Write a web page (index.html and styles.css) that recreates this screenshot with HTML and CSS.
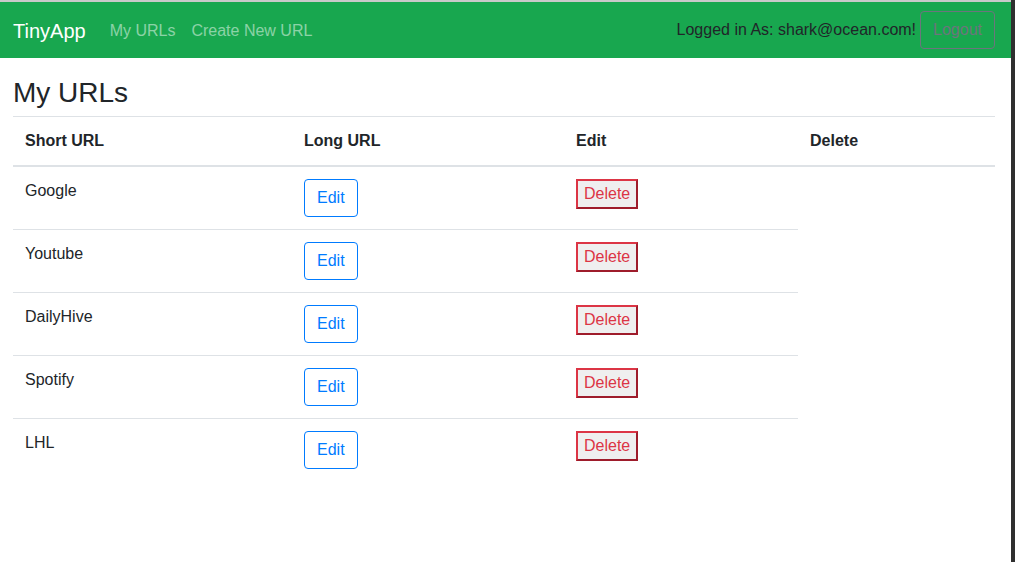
FILE: index.html
```html
<!DOCTYPE html>
<html lang="en">
<head>
<meta charset="utf-8">
<title>TinyApp</title>
<link rel="stylesheet" href="styles.css">
</head>
<body>
<div class="frame">
  <div class="page">
    <nav class="navbar">
      <a class="brand" href="#">TinyApp</a>
      <ul class="nav-links">
        <li><a class="nav-link" href="#">My URLs</a></li>
        <li><a class="nav-link" href="#">Create New URL</a></li>
      </ul>
      <div class="user">
        <span class="user-text">Logged in As: shark@ocean.com!</span>
        <button class="btn-logout" type="button">Logout</button>
      </div>
    </nav>
    <main class="content">
      <h3 class="title">My URLs</h3>
      <table class="url-table">
        <thead>
          <tr>
            <th class="col-short">Short URL</th>
            <th class="col-long">Long URL</th>
            <th class="col-edit">Edit</th>
            <th class="col-delete">Delete</th>
          </tr>
        </thead>
        <tbody>
          <tr>
            <td>Google</td>
            <td><a class="btn-edit" href="#">Edit</a></td>
            <td><button class="btn-delete" type="button">Delete</button></td>
          </tr>
          <tr>
            <td>Youtube</td>
            <td><a class="btn-edit" href="#">Edit</a></td>
            <td><button class="btn-delete" type="button">Delete</button></td>
          </tr>
          <tr>
            <td>DailyHive</td>
            <td><a class="btn-edit" href="#">Edit</a></td>
            <td><button class="btn-delete" type="button">Delete</button></td>
          </tr>
          <tr>
            <td>Spotify</td>
            <td><a class="btn-edit" href="#">Edit</a></td>
            <td><button class="btn-delete" type="button">Delete</button></td>
          </tr>
          <tr>
            <td>LHL</td>
            <td><a class="btn-edit" href="#">Edit</a></td>
            <td><button class="btn-delete" type="button">Delete</button></td>
          </tr>
        </tbody>
      </table>
    </main>
  </div>
  <div class="edge"></div>
</div>
</body>
</html>
```

FILE: styles.css
```css
* { box-sizing: border-box; }

html, body {
  margin: 0;
  height: 100%;
}

body {
  font-family: "Liberation Sans", Arial, sans-serif;
  font-size: 16px;
  line-height: 1.5;
  color: #212529;
  background: #fff;
}

.frame {
  display: flex;
  height: 562px;
}

.page {
  flex: 1;
  border-top: 2px solid #c9c9c9;
}

.edge {
  width: 4px;
  background: #2f2f2f;
}

.navbar {
  display: flex;
  align-items: center;
  height: 56px;
  padding: 0 16px 0 13px;
  background: #18a74f;
}

.brand {
  font-size: 20px;
  line-height: 30px;
  color: #fff;
  text-decoration: none;
  margin-right: 16px;
  margin-top: 2px;
}

.nav-links {
  display: flex;
  list-style: none;
  margin: 2px 0 0 0;
  padding: 0;
}

.nav-link {
  display: block;
  padding: 8px;
  color: rgba(255, 255, 255, 0.5);
  text-decoration: none;
}

.user {
  margin-left: auto;
  display: flex;
  align-items: center;
  gap: 4px;
  margin-top: 0;
}

.user-text {
  color: #212529;
  margin-top: -1px;
}

.btn-logout {
  font-family: inherit;
  font-size: 16px;
  line-height: 24px;
  padding: 6px 12px;
  border: 1px solid #6c757d;
  border-radius: 4px;
  color: #6c757d;
  background: transparent;
}

.content {
  padding: 18px 16px 0 13px;
}

.title {
  font-size: 28px;
  font-weight: 500;
  line-height: 1.2;
  margin: 0 0 6px 0;
}

.url-table {
  width: 100%;
  border-collapse: collapse;
  table-layout: fixed;
}

.url-table th,
.url-table td {
  padding: 12px;
  text-align: left;
  vertical-align: top;
  border-top: 1px solid #dee2e6;
}

.url-table th {
  font-weight: bold;
  border-bottom: 2px solid #dee2e6;
}

.col-short { width: 279px; }
.col-long { width: 272px; }
.col-edit { width: 234px; }
.col-delete { width: 197px; }

.btn-edit {
  display: inline-block;
  padding: 6px 12px;
  line-height: 24px;
  border: 1px solid #007bff;
  border-radius: 4px;
  color: #007bff;
  text-decoration: none;
}

.btn-delete {
  font-family: inherit;
  font-size: 16px;
  line-height: 24px;
  padding: 1px 6px;
  margin: 0;
  border: 2px solid;
  border-color: #dc3545 #9e1c2b #9e1c2b #dc3545;
  background: #efefef;
  color: #dc3545;
}
```
